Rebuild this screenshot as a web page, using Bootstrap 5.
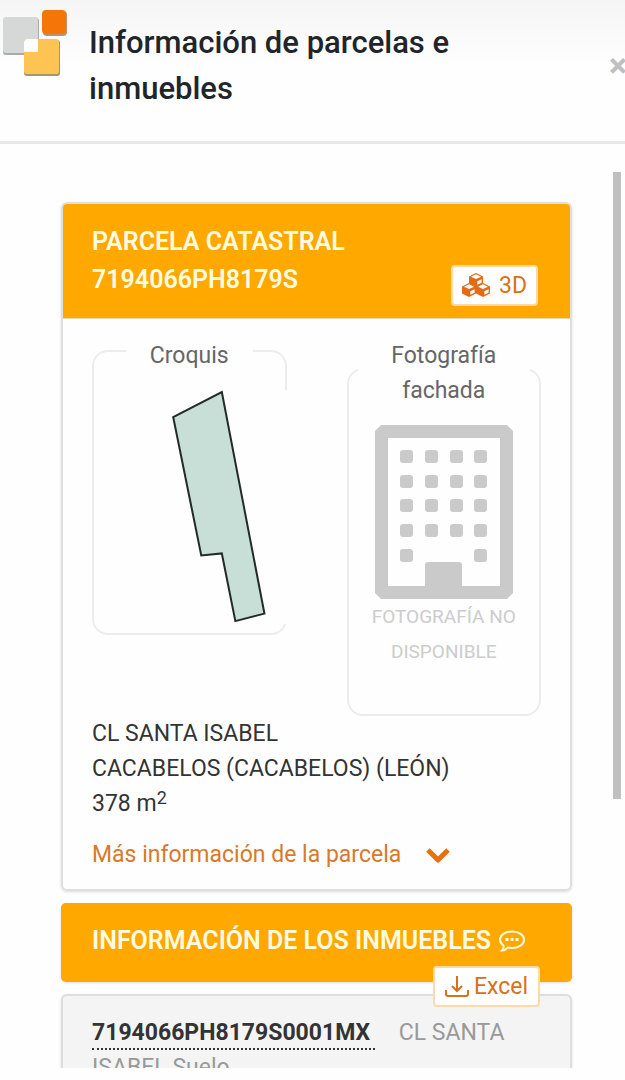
<!DOCTYPE html>
<html lang="es">
<head>
<meta charset="utf-8">
<meta name="viewport" content="width=device-width, initial-scale=1">
<title>Información de parcelas e inmuebles</title>
<link href="https://cdn.jsdelivr.net/npm/bootstrap@5.3.0/dist/css/bootstrap.min.css" rel="stylesheet">
<style>
body{font-family:Roboto,"Liberation Sans",sans-serif;font-size:23px;line-height:35px;color:#333;background:#fefefe}
.top-bar{border-bottom:3px solid #e8e8e8;padding:20px 0 29px 2px;background:linear-gradient(#f4f5f4,#fefefe 64px)}
.top-bar h1{font-size:31px;line-height:46px;font-weight:500;color:#212529;max-width:400px;margin-left:21px}
.logo{width:66px;height:68px;margin-top:-11px}
.close-x{font-size:34px;line-height:46px;font-weight:700;color:#bfbfbf;width:16px;margin-top:22px}
.scroll-zone{margin:28px 0 12px}
.cards{padding:30px 41px 0 61px}
.thumb{width:8px;height:70%;margin-right:4px;background:#c0c0c0}
.panel{border:2px solid #dedede;border-radius:6px;box-shadow:0 1px 3px #0002;margin-bottom:12px}
.panel-title{background:#ffa800;color:#fffbe0;padding:19px 29px;font-size:25px;line-height:38px;font-weight:600;border-radius:4px}
.panel-title h2{font:inherit}
.panel-title.joined{border-radius:4px 4px 0 0;border-bottom:1px solid #e8d8b0}
.panel-title.lone{margin:-2px;padding:19px 31px 22px;border-radius:5px}
.tool-btn{position:absolute;right:32px;background:#fff;color:#d9701a;border:2px solid #ffd9a8;border-radius:4px;font-size:23px;line-height:37px}
.tool-btn svg{width:30px;height:26px}
.btn-3d{bottom:12px;padding:0 9px 0 8px}
.btn-xls{bottom:-25px;padding:0 10px 0 9px;z-index:2}
.tool-btn .tray{width:26px}
.panel-text{padding:10px 29px 17px}
.pics{display:grid;grid-template-columns:1fr 1fr;gap:60px}
.pics fieldset{border:2px solid #ececec;border-radius:16px;padding:0 9px 9px}
.pics legend{float:none;width:auto;margin:0 auto 17px;padding:9px 24px 0;font-size:23px;line-height:35px;color:#666;text-align:center}
.pics .photo{padding-bottom:45px}
.sketch{width:calc(100% + 13px);background:#fefefe}
.facade{width:138px}
.no-photo{font-size:19px;color:#ccc}
.more{color:#d9792a}
.unit{background:#f4f4f4;padding:19px 29px;color:#999}
.unit a{color:#333;font-weight:700;border-bottom:2px dotted #333;padding-right:5px;margin-right:18px;line-height:30px;display:inline-block}
sup{font-size:18px;top:-7px}
</style>
</head>
<body>
<div class="vh-100 d-flex flex-column overflow-hidden">
<header class="top-bar d-flex align-items-start">
  <svg class="logo flex-shrink-0" viewBox="0 0 66 68" aria-hidden="true">
    <rect x="1" y="9" width="36" height="37" rx="3" fill="#aaa"/><rect x="1" y="8" width="35" height="36" rx="3" fill="#d6d7d7"/>
    <rect x="41" y="2" width="24" height="25" rx="4" fill="#b9936f"/><rect x="40" y="1" width="24" height="24" rx="4" fill="#f57508"/>
    <rect x="22" y="31" width="36" height="36" rx="3" fill="#a89568"/><rect x="22" y="30" width="35" height="35" rx="3" fill="#fdc453"/>
    <path d="M22 43V34q0-4 4-4h10v13z" fill="#fefefe"/>
  </svg>
  <h1 class="mb-0 me-auto">Información de parcelas e inmuebles</h1>
  <button class="close-x btn border-0 p-0 text-start flex-shrink-0" type="button" aria-label="Cerrar">×</button>
</header>
<main class="scroll-zone d-flex flex-grow-1 overflow-hidden">
  <div class="cards flex-grow-1">
    <section class="panel">
      <div class="panel-title joined position-relative">
        <h2 class="mb-0">PARCELA CATASTRAL<br>7194066PH8179S</h2>
        <button class="tool-btn btn-3d d-flex align-items-center gap-2" type="button">
          <svg viewBox="0 0 30 26" aria-hidden="true"><defs><g id="cube"><path d="M0 3.500 7-.1 14 3.500V10.500L7 14 0 10.500z" fill="#e36b17"/><path d="M2 3.800 7 1.300l5 2.500-5 2.300z" fill="#fff"/><path d="M8.300 8.200 12.600 6.200V9.700L8.300 11.700z" fill="#fff"/></g></defs>
          <use href="#cube" x="8" y="0"/><use href="#cube" x="1" y="10"/><use href="#cube" x="15" y="10"/></svg>3D</button>
      </div>
      <div class="panel-text">
        <div class="pics align-items-start">
          <fieldset>
            <legend>Croquis</legend>
            <svg class="sketch d-block" viewBox="0 0 185 233" role="img" aria-label="Croquis de la parcela"><path d="M70 27 118.500 2 161 223 132 230.500 118.500 163 98 165z" fill="#c8dfd7" stroke="#222b29" stroke-width="2"/></svg>
          </fieldset>
          <fieldset class="photo">
            <legend>Fotografía fachada</legend>
            <svg class="facade d-block mx-auto" viewBox="0 0 138 174" aria-hidden="true" fill="#cacaca">
              <path fill-rule="evenodd" d="M6 0H132L138 6V168L132 174H6L0 168V6zM13 13V161H50V140q0-3 3-3H84q3 0 3 3V161H125V13z"/>
              <g id="floor"><rect x="25" y="25" width="13" height="13" rx="3"/><rect x="99" y="25" width="13" height="13" rx="3"/></g>
              <g id="mid"><rect x="50" y="25" width="13" height="13" rx="3"/><rect x="75" y="25" width="13" height="13" rx="3"/></g>
              <use href="#floor" y="25"/><use href="#mid" y="25"/><use href="#floor" y="49"/><use href="#mid" y="49"/><use href="#floor" y="74"/><use href="#mid" y="74"/><use href="#floor" y="99"/>
            </svg>
            <p class="no-photo text-center mb-0">FOTOGRAFÍA NO<br>DISPONIBLE</p>
          </fieldset>
        </div>
        <p class="mb-3">CL SANTA ISABEL<br>CACABELOS (CACABELOS) (LEÓN)<br>378 m<sup>2</sup></p>
        <a class="more text-decoration-none d-flex align-items-center" href="#">Más información de la parcela
          <svg class="ms-4" width="26" height="18" viewBox="0 0 26 18" fill="none" stroke="#e8710f" stroke-width="5" stroke-linejoin="round" aria-hidden="true"><path d="M3 4 13 14 23 4"/></svg></a>
      </div>
    </section>
    <section class="panel">
      <div class="panel-title lone position-relative">
        <h2 class="mb-0 d-flex align-items-center text-nowrap">INFORMACIÓN DE LOS INMUEBLES
          <svg class="ms-2" width="26" height="22" viewBox="0 0 26 22" fill="none" stroke="#fffbe0" stroke-width="2" aria-hidden="true"><path d="M4.500 15.500C2.500 14 1 12 1 9.700 1 5 6 1.500 13 1.500S25 5 25 9.700 20 18 13 18q-2 0-4-.5Q6 20.500 3 20.500 5 18.500 4.500 15.500z"/><path d="M6.500 9.500h3M11.500 9.500h3M16.500 9.500h3" stroke-width="3"/></svg></h2>
        <button class="tool-btn btn-xls d-flex align-items-center gap-1" type="button">
          <svg class="tray" viewBox="0 0 26 26" fill="none" stroke="#d9701a" stroke-width="2" aria-hidden="true"><path d="M13 2V17M8 12 13 17 18 12M2 16V20q0 2 2 2H22q2 0 2-2V16"/></svg>Excel</button>
      </div>
    </section>
    <section class="panel unit"><a class="text-decoration-none" href="#">7194066PH8179S0001MX</a> CL SANTA ISABEL Suelo</section>
  </div>
  <div class="thumb flex-shrink-0"></div>
</main>
</div>
<script src="https://cdn.jsdelivr.net/npm/bootstrap@5.3.0/dist/js/bootstrap.bundle.min.js"></script>
</body>
</html>
